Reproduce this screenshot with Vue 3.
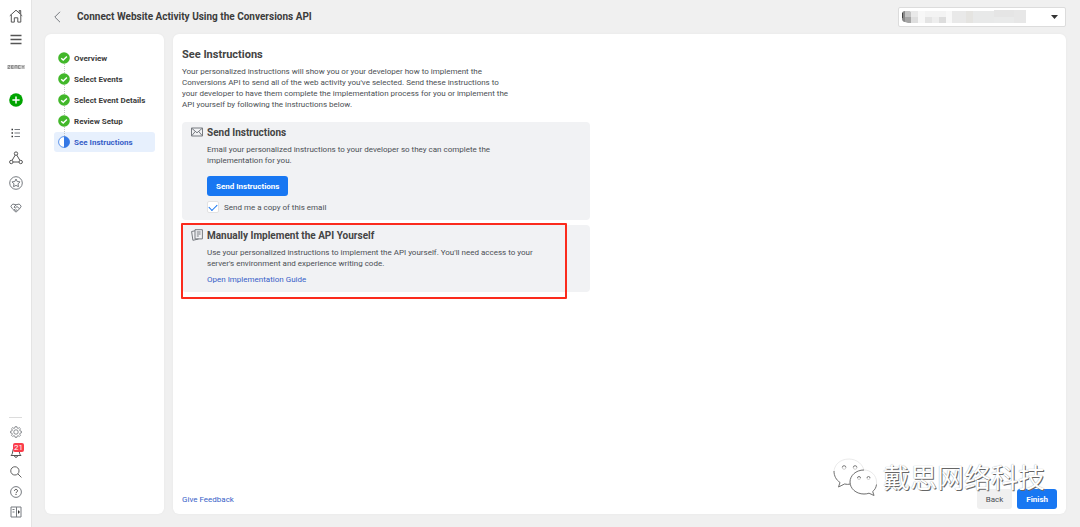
<template>
    <div class="page">
        <nav class="rail" aria-label="Business tools">
            <a href="#" class="rail-item" aria-label="Home">
                <svg width="14" height="14" viewBox="0 0 14 14" class="dark">
                    <path d="M.8 6.8 7 1.2l6.2 5.600M2.300 5.800v7.300h3V8.800h3.500v4.300h3V5.800M10.200 3.700V1.500h1.500v3.600" />
                </svg>
            </a>
            <button type="button" class="rail-item" aria-label="Menu">
                <svg width="12" height="12" viewBox="0 0 12 12" class="dark">
                    <path d="M.5 1.500h11M.5 5.500h11M.5 9.500h11" stroke-width="1.300" />
                </svg>
            </button>
            <a href="#" class="rail-item brand" aria-label="Brand">
                <svg width="18" height="6" viewBox="0 0 18 6">
                    <path d="M0 1h18v4H0z" fill="#cfcfcf" stroke="none" />
                    <path d="M1 1.500h2l-2 3h2M4.500 1.500v3M4.500 1.500h2M4.500 3h2M4.500 4.500h2M8 1.500v3M8 1.500h2v3M11.500 1.500v3M11.500 1.500h2M11.500 4.500h2M15 1.500l1 1.500 1-1.500M16 3v1.500" stroke="#777" stroke-width=".7" />
                </svg>
            </a>
            <button type="button" class="rail-item create" aria-label="Create">
                <svg width="14" height="14" viewBox="0 0 14 14">
                    <circle cx="7" cy="7" r="6.800" fill="#00a400" stroke="none" />
                    <path d="M7 3.400v7.200M3.400 7h7.200" stroke="#fff" stroke-width="1.500" />
                </svg>
            </button>
            <a href="#" class="rail-item tool" aria-label="Lists">
                <svg width="10" height="10" viewBox="0 0 10 10">
                    <path d="M3.500 1.500H9M3.500 5H9M3.500 8.500H9" />
                    <path d="M.5 1.500H2M.5 5H2M.5 8.500H2" stroke="#333" stroke-width="1.400" />
                </svg>
            </a>
            <a href="#" class="rail-item tool" aria-label="Data sources">
                <svg width="14" height="14" viewBox="0 0 14 14" class="dark">
                    <circle cx="7" cy="2.600" r="1.700" />
                    <circle cx="2.300" cy="11" r="1.700" />
                    <circle cx="11.700" cy="11" r="1.700" />
                    <path d="M6.200 4.100 3.100 9.400M7.800 4.100l3.100 5.300M4 11h6" />
                </svg>
            </a>
            <a href="#" class="rail-item tool" aria-label="Favorites">
                <svg width="14" height="14" viewBox="0 0 14 14">
                    <circle cx="7" cy="7" r="6.300" />
                    <path d="m7 3 1.200 2.500 2.800.4-2 2 .5 2.800L7 9.400l-2.500 1.300.5-2.800-2-2 2.800-.4z" />
                </svg>
            </a>
            <a href="#" class="rail-item tool" aria-label="Partners">
                <svg width="12" height="10" viewBox="0 0 12 10">
                    <path d="M.8 3.200 2.800 1 6 1.800 9.200 1l2 2.200-1.600 2.600L6 9.200 2.400 5.800zM6 1.800 4 4.200l1.500.6L7 3.500l2.600 2.300M4 7.200l1.200-1.400M5.200 8.200l1.400-1.500M7.300 7.700 6.200 6.500" />
                </svg>
            </a>
            <div class="rail-bottom">
                <button type="button" class="rail-item" aria-label="Settings">
                    <svg width="12" height="12" viewBox="0 0 14 14">
                        <path d="m5.800 1 .3-.3h1.800l.4 1.600 1.200.5 1.400-.9 1.300 1.300-.9 1.400.5 1.200 1.600.4v1.700l-1.600.4-.5 1.200.9 1.400-1.300 1.300-1.400-.9-1.200.5-.4 1.500H6.100l-.4-1.500-1.200-.5-1.400.9-1.300-1.300.9-1.400-.5-1.200L.6 7.900V6.200l1.600-.4.5-1.200-.9-1.400 1.300-1.300 1.400.9 1.200-.5z" />
                        <circle cx="7" cy="7" r="2.600" />
                    </svg>
                </button>
                <button type="button" class="rail-item" aria-label="Notifications">
                    <svg width="12" height="14" viewBox="0 0 12 14" class="dark">
                        <path d="M1 10.500c1.700-1.500 1.500-3 1.800-4.800C3.200 3.600 4.400 2.500 6 2.500s2.800 1.100 3.200 3.200c.3 1.800.1 3.300 1.800 4.800zM4.500 11c.2 1.800 2.800 1.800 3 0" />
                    </svg>
                    <span class="count">21</span>
                </button>
                <button type="button" class="rail-item" aria-label="Search">
                    <svg width="12" height="12" viewBox="0 0 13 13" class="dark">
                        <circle cx="5.300" cy="5.300" r="4.500" />
                        <path d="m8.600 8.600 3.800 3.800" />
                    </svg>
                </button>
                <button type="button" class="rail-item" aria-label="Help">
                    <svg width="12" height="12" viewBox="0 0 12 12">
                        <circle cx="6" cy="6" r="5.400" />
                        <path d="M4.500 4.900c0-2 3-2 3 0C7.500 6 6 6 6 7.200M6 8v1" stroke="#444" />
                    </svg>
                </button>
                <button type="button" class="rail-item" aria-label="Toggle panel">
                    <svg width="12" height="12" viewBox="0 0 12 12">
                        <path d="M1 1h10v10H1zM6.500 1v10M2.500 3.500h2M2.500 6h2" />
                        <path d="M8 4v4l2-2z" fill="#333" stroke="none" />
                    </svg>
                </button>
            </div>
        </nav>

        <div class="main">
            <header class="top">
                <button type="button" class="back-arrow" aria-label="Go back">
                    <svg width="8" height="12" viewBox="0 0 8 12">
                        <path d="M7 .8 1.800 6 7 11.200" />
                    </svg>
                </button>
                <h1>Connect Website Activity Using the Conversions API</h1>
                <div class="account">
                    <select aria-label="Account">
                        <option></option>
                    </select>
                    <svg class="account-name" width="126" height="14" viewBox="0 0 126 14">
                        <path d="M0 3c0-1 1-2 3-2v11C1 12 0 10 0 9z" fill="#888" />
                        <path d="M0 3h1v5H0z" fill="#444" />
                        <path d="M3 1h5l1 1v5H3z" fill="#c3c3c3" />
                        <path d="M3 7h6v6H6l-3-1z" fill="#a5a5a5" />
                        <path d="M9 1h7v6H9z" fill="#e9e9e9" />
                        <path d="M9 7h7v6H9z" fill="#dedede" />
                        <path d="M16 1h7v12h-7z" fill="#f7f7f7" />
                        <path d="M23 1h21v6H23z" fill="#f3f3f3" />
                        <path d="M23 7h7v6h-7z" fill="#e4e4e4" />
                        <path d="M30 7h7v6h-7z" fill="#eeeeee" />
                        <path d="M37 7h7v6h-7z" fill="#dddddd" />
                        <path d="M44 1h6v12h-6z" fill="#f8f8f8" />
                        <path d="M50 1h14v12H50z" fill="#e9e9e9" />
                        <path d="M64 1h7v12h-7z" fill="#e5e4e1" />
                        <path d="M71 1h21v12H71z" fill="#e8e9e9" />
                        <path d="M92 0h20v7H92z" fill="#e5e5e5" />
                        <path d="M92 7h20v6H92z" fill="#e9eaea" />
                        <path d="M112 0h12v13h-12z" fill="#e7e7e7" />
                    </svg>
                    <svg class="caret" width="7" height="4" viewBox="0 0 7 4">
                        <path d="M0 0h7L3.500 4z" fill="#333" />
                    </svg>
                </div>
            </header>

            <div class="panels">
                <aside class="steps">
                    <ol>
                        <li v-for="(step, index) in steps" :key="index" :class="{ active: activeStep === index }">
                            <button type="button" @click="activeStep = index">
                                <svg v-if="index < steps.length - 1" width="12" height="12" viewBox="0 0 12 12">
                                    <circle cx="6" cy="6" r="5.800" fill="#42b72a" />
                                    <path d="m3.200 6.200 2 1.900L8.900 4.400" fill="none" stroke="#fff" stroke-width="1.400" />
                                </svg>
                                <svg v-else width="12" height="12" viewBox="0 0 12 12">
                                    <circle cx="6" cy="6" r="5.400" fill="#fff" stroke="#3578e5" stroke-width=".8" />
                                    <path d="M6 .3a5.700 5.700 0 0 1 0 11.400z" fill="#3578e5" />
                                </svg>
                                {{ step }}
                            </button>
                        </li>
                    </ol>
                </aside>

                <main class="content">
                    <h2>See Instructions</h2>
                    <p class="intro">
                        Your personalized instructions will show you or your developer how to implement the
                        Conversions API to send all of the web activity you've selected. Send these instructions to
                        your developer to have them complete the implementation process for you or implement the
                        API yourself by following the instructions below.
                    </p>

                    <section class="card">
                        <svg class="card-icon" width="12" height="12" viewBox="0 0 12 12">
                            <path d="M.5 2h11v8H.5zM.8 2.300 6 6.800l5.200-4.500M.8 9.700l3.500-4.300M11.200 9.700 7.700 5.400" />
                        </svg>
                        <div class="card-body">
                            <h3>Send Instructions</h3>
                            <p>
                                Email your personalized instructions to your developer so they can complete the
                                implementation for you.
                            </p>
                            <button type="button" class="btn primary send">Send Instructions</button>
                            <div class="copy">
                                <input id="copy" v-model="sendCopy" type="checkbox" />
                                <label for="copy">Send me a copy of this email</label>
                            </div>
                        </div>
                    </section>

                    <section class="card">
                        <svg class="card-icon" width="12" height="12" viewBox="0 0 12 12">
                            <path d="M4 .7h7.400v9.200H4zM4 1.800.6 2.500l1.300 8.800 5.600-1.300M5.800 3h3.800M5.800 5h3.800M5.800 7h2" />
                        </svg>
                        <div class="card-body">
                            <h3>Manually Implement the API Yourself</h3>
                            <p>
                                Use your personalized instructions to implement the API yourself. You'll need access to your
                                server's environment and experience writing code.
                            </p>
                            <a href="#" class="guide">Open Implementation Guide</a>
                        </div>
                        <div class="highlight"></div>
                    </section>

                    <footer>
                        <a href="#">Give Feedback</a>
                        <div class="actions">
                            <button type="button" class="btn">Back</button>
                            <button type="button" class="btn primary">Finish</button>
                        </div>
                    </footer>
                </main>
            </div>
        </div>

        <div class="watermark">
            <svg width="44" height="38" viewBox="0 0 44 38">
                <g fill="#fff" stroke="#d4d4d4" stroke-width=".5">
                    <path d="M16 1C7 1 1 7 1 14c0 4.500 2.300 8 6 10.500L5.500 29l6-3c9 2 19-2 19.500-12C31 7 24 1 16 1z" />
                    <path d="M31 12c-8 0-14 5.500-14 12s6 12 14 12c2 0 3.500-.3 5-.8l5 2.300-1.300-4C42.500 31 44 28 43.500 24 43.500 17.500 38 12 31 12z" />
                </g>
                <g fill="none" stroke="#777" stroke-width="1">
                    <path d="M1 13c0 5 2.300 9 6 11.500L5.500 29l6-3c2 .5 4 .5 6 0M31 12c-8 0-14 5.500-14 12s6 12 14 12c2 0 3.500-.3 5-.8l5 2.300-1.300-4c2-1.500 3.500-4 3.800-7" />
                    <path d="M9.300 9.500a1.800 1.800 0 0 1 3.600 0M20.300 9.500a1.800 1.800 0 0 1 3.600 0M24.500 20a1.500 1.500 0 0 1 3 0M34 20a1.500 1.500 0 0 1 3 0" />
                </g>
                <g fill="none" stroke="#bbb" stroke-width=".7">
                    <path d="M9.300 9.500a1.800 1.800 0 0 0 3.600 0M20.300 9.500a1.800 1.800 0 0 0 3.600 0M24.500 20a1.500 1.500 0 0 0 3 0M34 20a1.500 1.500 0 0 0 3 0" />
                </g>
            </svg>
            <span>戴思网络科技</span>
        </div>
    </div>
</template>

<script setup>
import { ref } from 'vue';

const steps = ref([
    "Overview",
    "Select Events",
    "Select Event Details",
    "Review Setup",
    "See Instructions",
]);
const activeStep = ref(4);
const sendCopy = ref(true);
</script>

<style>
body {
    margin: 0;
    background: #f0f0f0;
}
</style>

<style scoped>
* {
    box-sizing: border-box;
}

.page {
    position: relative;
    display: flex;
    min-height: 100vh;
    font-family: Roboto, "Liberation Sans", sans-serif;
    font-size: 8px;
    line-height: 11px;
    color: #4b4f54;
}

h1,
h2,
h3,
p,
ol {
    margin: 0;
    padding: 0;
}

button {
    border: 0;
    padding: 0;
    background: none;
    font: inherit;
    color: inherit;
    cursor: pointer;
}

a {
    color: #385fc8;
    text-decoration: none;
}

svg {
    display: block;
    flex: none;
}

.rail {
    display: flex;
    flex-direction: column;
    flex: none;
    width: 32px;
    padding: 4px 0 5px;
    background: #fff;
    border-right: 1px solid #e4e4e4;
}

.rail svg,
.card-icon,
.back-arrow svg {
    fill: none;
    stroke: #777b80;
    stroke-width: 1;
}

.rail svg.dark {
    stroke: #555;
}

.rail-item {
    position: relative;
    display: flex;
    align-items: center;
    justify-content: center;
    width: 100%;
    height: 24px;
}

.brand {
    height: 30px;
}

.create {
    height: 36px;
    margin-bottom: 2px;
}

.tool {
    height: 25px;
}

.rail-bottom {
    margin-top: auto;
    padding-top: 5px;
    background: linear-gradient(#dcdcdc, #dcdcdc) center top / 13px 1px no-repeat;
}

.rail-bottom .rail-item {
    height: 20px;
}

.count {
    position: absolute;
    top: 1px;
    left: 13px;
    padding: 0 1px;
    border-radius: 2px;
    background: #fa3e4b;
    color: #fff;
    font-size: 8px;
    line-height: 9px;
}

.main {
    display: flex;
    flex-direction: column;
    flex: 1;
    min-width: 0;
    padding: 0 14px 13px 13px;
}

.top {
    display: flex;
    align-items: center;
    height: 34px;
}

.back-arrow {
    width: 32px;
    padding-left: 8px;
}

.top h1 {
    font-size: 10px;
    line-height: 14px;
    color: #3c3c3c;
}

.account {
    position: relative;
    width: 168px;
    margin-left: auto;
}

.account select {
    display: block;
    width: 100%;
    height: 20px;
    border: 1px solid #dcdcdc;
    border-radius: 2px;
    background: #fff;
    appearance: none;
}

.account-name,
.caret {
    position: absolute;
    pointer-events: none;
}

.account-name {
    top: 3px;
    left: 4px;
}

.caret {
    top: 8px;
    right: 8px;
}

.panels {
    display: flex;
    flex: 1;
    gap: 9px;
}

.steps,
.content {
    background: #fff;
    border-radius: 6px;
    box-shadow: 0 0 2px #e4e4e4;
}

.steps {
    flex: none;
    width: 119px;
    padding: 14px 9px;
}

.steps ol {
    display: flex;
    flex-direction: column;
    gap: 1px;
    list-style: none;
}

.steps li {
    position: relative;
    border-radius: 3px;
}

.steps li + li::before {
    content: "";
    position: absolute;
    top: -5px;
    left: 10px;
    height: 9px;
    border-left: 1px dotted #c4c4c4;
}

.steps button {
    display: flex;
    align-items: center;
    gap: 4px;
    width: 100%;
    height: 20px;
    padding-left: 4px;
    font-weight: 700;
    color: #3c3c3c;
    white-space: nowrap;
}

.steps .active {
    background: #e7f0fd;
}

.steps .active button {
    color: #385fc8;
}

.content {
    display: flex;
    flex-direction: column;
    flex: 1;
    min-width: 0;
    padding: 14px 9px 5px;
}

.content h2 {
    font-size: 11px;
    line-height: 14px;
    color: #444;
}

.intro {
    max-width: 330px;
    margin: 4px 0 12px;
}

.card {
    position: relative;
    display: flex;
    gap: 4px;
    width: 100%;
    max-width: 408px;
    padding: 4px 9px 7px;
    border-radius: 4px;
    background: #f1f2f4;
}

.card + .card {
    margin-top: 5px;
}

.card-body {
    max-width: 330px;
}

.card h3 {
    margin-bottom: 4px;
    font-size: 10px;
    line-height: 14px;
    color: #444;
}

.btn {
    height: 20px;
    padding: 0 9px;
    border-radius: 3px;
    background: #f0f0f0;
    font-size: 8px;
    color: #4b4f54;
}

.primary {
    background: #1877f2;
    color: #fff;
    font-weight: 700;
}

.send {
    display: block;
    margin: 10px 0 5px;
}

.copy {
    display: flex;
    align-items: center;
    gap: 5px;
}

.copy input {
    width: 12px;
    height: 12px;
    margin: 0;
    border: 1px solid #e2e2e2;
    border-radius: 2px;
    background: #fff;
    appearance: none;
}

.copy input:checked::before {
    content: "";
    display: block;
    width: 7px;
    height: 4px;
    margin: 2px 1px;
    border: solid #1877f2;
    border-width: 0 0 1px 1px;
    transform: rotate(-45deg);
}

.guide {
    display: block;
    margin-top: 5px;
}

.highlight {
    position: absolute;
    top: -2px;
    right: 23px;
    bottom: -7px;
    left: -1px;
    border: 2px solid #fb2b1d;
    border-radius: 1px;
    pointer-events: none;
}

footer {
    display: flex;
    align-items: center;
    justify-content: space-between;
    margin-top: auto;
}

.actions {
    display: flex;
    gap: 5px;
}

.watermark {
    position: absolute;
    right: 35px;
    bottom: 30px;
    display: flex;
    align-items: center;
    gap: 6px;
    color: #fff;
    font-family: "Noto Sans CJK SC", sans-serif;
    font-size: 27px;
    line-height: 40px;
    text-shadow: 1px 1px 0 #666, 0 0 1px #999;
    pointer-events: none;
}
</style>
